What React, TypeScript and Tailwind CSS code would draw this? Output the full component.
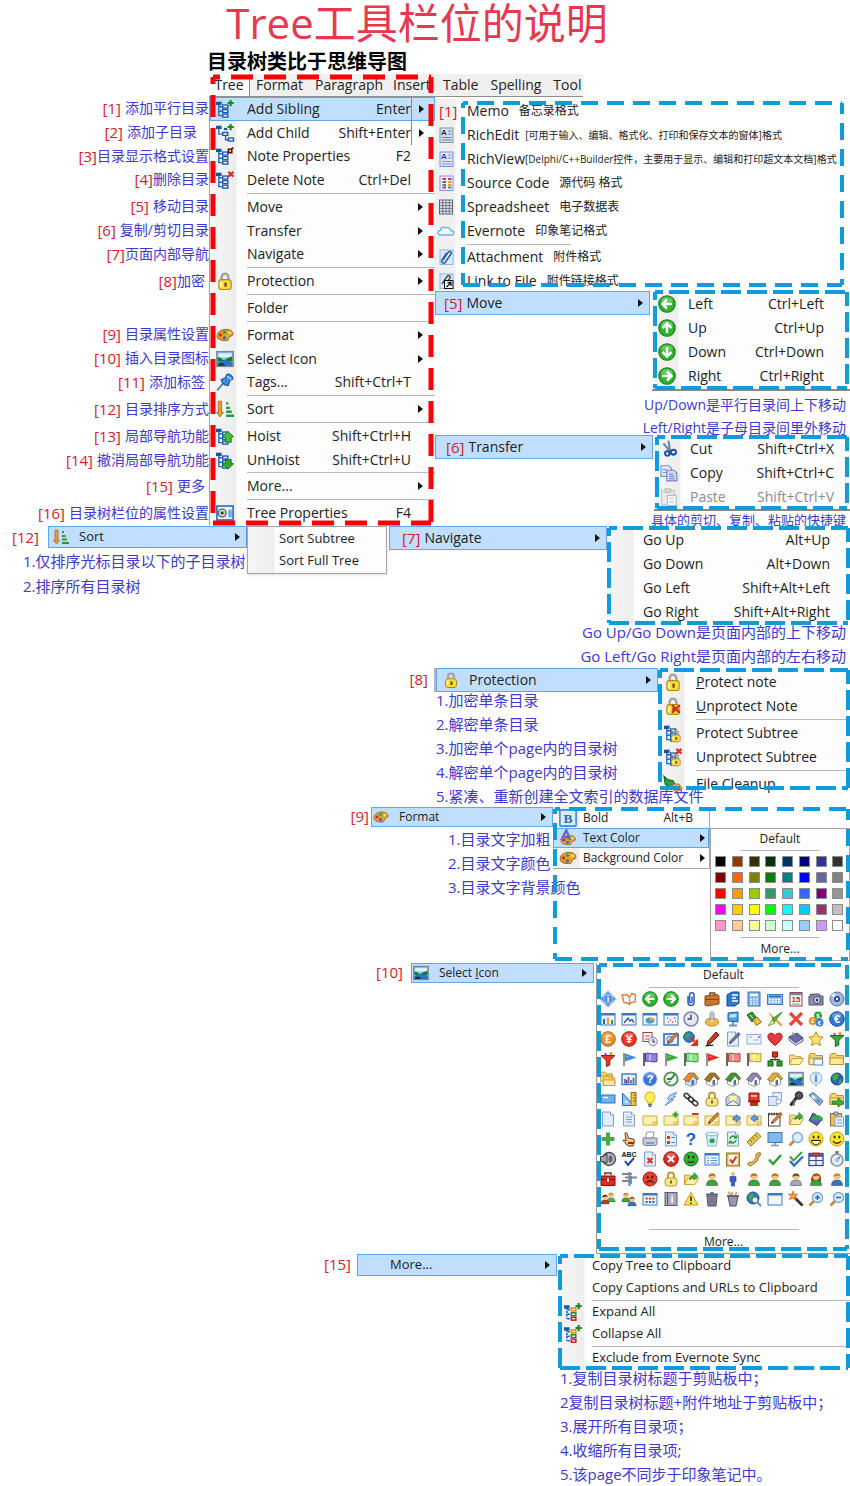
import type { ReactNode } from 'react';

const GREEN = '#2f9e2f';
const BLUE = '#2f6fc4';
const GOLD = '#f0c244';
const RED = '#d9301f';

/* ---------- small drawings ---------- */

function Txt({ c, fill = '#fff', size = 11, x = 8, y = 12 }: { c: string; fill?: string; size?: number; x?: number; y?: number }) {
  return (
    <text x={x} y={y} fontSize={size} fontWeight="bold" textAnchor="middle" fill={fill} fontFamily="Liberation Sans, sans-serif">
      {c}
    </text>
  );
}

const ball = (fill: string, stroke: string, inner?: ReactNode) => (
  <>
    <circle cx="8" cy="8" r="7.3" fill={fill} stroke={stroke} />
    <ellipse cx="8" cy="4.6" rx="5" ry="2.8" fill="#fff" opacity=".25" />
    {inner}
  </>
);

const arrowBall = (rotate: number) =>
  ball(
    '#2fb32f',
    '#147a14',
    <g transform={`rotate(${rotate} 8 8)`}>
      <path d="M12.5 8H4.5M8 4L4 8l4 4" fill="none" stroke="#fff" strokeWidth="2.2" />
    </g>
  );

const doc = (inner?: ReactNode) => (
  <>
    <path d="M2.5 1h8l3 3v11h-11z" fill="#e4eefb" stroke="#7d9fd0" />
    <path d="M10.5 1v3h3" fill="#fff" stroke="#7d9fd0" />
    {inner}
  </>
);

const pane = (inner?: ReactNode) => (
  <>
    <rect x="1" y="2.5" width="14" height="11.5" fill="#f2f8ff" stroke="#3d78c2" />
    <path d="M1 3.5h14" stroke="#3d78c2" strokeWidth="2" />
    {inner}
  </>
);

const note = (inner?: ReactNode) => (
  <>
    <path d="M1 5h14v9H1z" fill="#fdf0a8" stroke="#d1ab45" />
    <path d="M11 11h4v3h-4z" fill="#f7d978" stroke="#d1ab45" strokeWidth=".7" />
    {inner}
  </>
);

const folder = (inner?: ReactNode) => (
  <>
    <path d="M1 13.5V4l1.5-1.5h4L8 4.5h6.5v9z" fill="#f6d46e" stroke="#c0912c" />
    <path d="M1 13.5V7h13.5v6.5z" fill="#fdeb9d" stroke="#c0912c" />
    {inner}
  </>
);

const folderOpen = (inner?: ReactNode) => (
  <>
    <path d="M1.5 13.5V4h5l1.5 1.5h5V8" fill="#f6dc84" stroke="#c9a23a" />
    <path d="M1.5 13.5L4.5 7.5h11l-3.5 6z" fill="#fff1a8" stroke="#c9a23a" />
    {inner}
  </>
);

const flagSmall = (fill: string) => (
  <>
    <path d="M3 2v13" stroke="#8a8a8a" strokeWidth="1.8" />
    <path d="M4 2.5l11.5 4L4 10.5z" fill={fill} />
    <path d="M5 4.5l4 1.5-4 .5z" fill="#fff" opacity=".35" />
  </>
);

const flagBig = (fill: string, stroke: string) => (
  <>
    <path d="M2 2V15" stroke="#66666e" strokeWidth="2" />
    <path d="M3.5 2.5c3-1.500 6 1.500 11.5 0v8c-5.500 1.500-7.500-1.500-11.5 0z" fill={fill} stroke={stroke} />
    <path d="M8 3.500v6" stroke="#fff" strokeWidth="1.800" opacity=".5" />
  </>
);

const house = (roof: string, wall = '#fffaf0') => (
  <>
    <path d="M2.5 8.5v4.500L8 15.500l5.500-2.500V8L9 4z" fill={wall} stroke="#7b8694" strokeWidth=".8" />
    <path d="M.5 8.500L6 2h5l4.800 5.500L14 9l-4-4.500L5.500 11z" fill={roof} stroke="#5a4020" strokeWidth=".6" />
    <path d="M8.500 9.500l2.500-.8v4.800l-2.500 1z" fill="#4d6f9f" />
  </>
);

const person = (hair: string, coat: string) => (
  <>
    <path d="M2.500 14.500c0-4 2-5.500 5.500-5.500s5.500 1.500 5.500 5.500z" fill={coat} stroke="#27402a" strokeWidth=".5" />
    <circle cx="8" cy="5.600" r="3.400" fill="#f7c486" />
    <path d="M4.500 6C4 1.500 12 1 11.600 6 10.500 4 7 4.500 4.500 6z" fill={hair} />
  </>
);

const face = (fill: string, stroke: string, mouth: string) => (
  <>
    <circle cx="8" cy="8" r="7" fill={fill} stroke={stroke} />
    <ellipse cx="5.600" cy="6" rx="1" ry="1.600" fill="#332200" />
    <ellipse cx="10.400" cy="6" rx="1" ry="1.600" fill="#332200" />
    <path d={mouth} fill="none" stroke="#332200" strokeWidth="1.300" />
  </>
);

const padlock = (
  <>
    <path d="M5 8V4.500a3 3 0 016 0V8" fill="none" stroke="#a3a3a3" strokeWidth="2.200" />
    <rect x="2.500" y="6.800" width="11" height="8.700" rx="2.500" fill="#f8dc3e" stroke="#b48a12" />
    <path d="M4.500 8.500v5" stroke="#fff6b0" strokeWidth="1.500" />
    <path d="M8.500 9.500v3.500" stroke="#5a4208" strokeWidth="2" />
  </>
);

const pencil = (fill = '#e88a2a') => (
  <>
    <path d="M13.500 1.500l1.500 2-8 8-2.500 1 .8-2.500z" fill={fill} stroke="#5a2a10" strokeWidth=".7" />
    <path d="M4.500 12.500l1.300-.6-.8-.8z" fill="#000" />
  </>
);

const cross = (fill = RED) => <path d="M3 3l10 10M13 3L3 13" stroke={fill} strokeWidth="3" />;

const lens = (inner?: ReactNode) => (
  <>
    <path d="M6 10L1.500 14.500" stroke="#c98a35" strokeWidth="2.600" />
    <circle cx="9.500" cy="6.500" r="5" fill="#d9effc" stroke="#7fa6d0" strokeWidth="1.300" />
    {inner}
  </>
);

const funnel = (fill: string, stroke: string) => (
  <>
    <path d="M1 4.500h14L9.800 9.500V14l-3.500 1.500v-6z" fill={fill} stroke={stroke} />
    <circle cx="11" cy="2.500" r="1.500" fill="#f28b23" />
    <circle cx="5.500" cy="3" r="1.200" fill="#a04ad0" />
  </>
);

const landscape = (
  <>
    <rect x=".8" y="1.500" width="14.400" height="13" fill="#8ccdf5" stroke="#7c8791" strokeWidth="1.400" />
    <path d="M2 3h12v3.500H2z" fill="#d8f1ff" />
    <path d="M1.500 10V6.500c3 0 4 2 5.500 2.500 2-.5 4-3 7.500-3V10z" fill="#1b7a35" />
    <path d="M1.500 11c3-2 9-3 13 0v3h-13z" fill="#2c6fd0" />
    <path d="M1.500 14c2-3.500 5-3 7 0z" fill="#123c1c" />
  </>
);

const palette = (
  <>
    <path d="M1 9c0-4 4-6 8-6s6.500 2 6 4.500c-.4 2-3 1-3.500 2.500s.5 3-3 3S1 12 1 9z" fill="#e8a030" stroke="#8a5510" strokeWidth=".8" />
    <circle cx="4" cy="8" r="1.500" fill="#d82c1c" />
    <circle cx="7.500" cy="5.500" r="1.500" fill="#37a53a" />
    <circle cx="12" cy="6" r="1.400" fill="#f6e25a" />
    <circle cx="7.500" cy="10.500" r="1.500" fill="#3a64c8" />
  </>
);

const tree = (
  <g>
    <path d="M2.500 4v9.900h4M2.500 6h4M2.500 10h4" fill="none" stroke="#1f67b8" strokeWidth="1.200" />
    <rect x="0" y="1.500" width="5" height="3" fill="#1757a6" />
    <rect x="6" y="4.500" width="4.500" height="2.600" fill="#fff" stroke="#1757a6" strokeWidth="1.200" />
    <rect x="6" y="8.600" width="4.500" height="2.600" fill="#fff" stroke="#1757a6" strokeWidth="1.200" />
    <rect x="6" y="12.600" width="4.500" height="2.600" fill="#fff" stroke="#1757a6" strokeWidth="1.200" />
  </g>
);

const treeBranch = (
  <>
    <path d="M2.500 4v5h4M8.500 10v4h3" fill="none" stroke="#1f67b8" strokeWidth="1.200" />
    <rect x="0" y="1.500" width="5" height="3" fill="#1757a6" />
    <rect x="6" y="7.500" width="4.500" height="2.600" fill="#fff" stroke="#1757a6" strokeWidth="1.200" />
    <rect x="11" y="12.500" width="4.500" height="2.600" fill="#fff" stroke="#1757a6" strokeWidth="1.200" />
    <path d="M7 4.500h3" stroke="#1757a6" strokeWidth="2" />
  </>
);

const greenPlus = <path d="M13 0v5.500M10.200 2.700h5.600" stroke="#1b8a1b" strokeWidth="1.900" />;
const redMark = <path d="M11 .8l4.500 4.200M15.500.8L11 5" stroke={RED} strokeWidth="1.900" />;

const icons: Record<string, ReactNode> = {
  infoDiamond: (
    <>
      <path d="M8 .5L15.500 8 8 15.500.5 8z" fill="#2c6fc9" stroke="#8fb7e8" strokeWidth="1.500" />
      <circle cx="8" cy="8" r="4.500" fill="#4a8fe2" stroke="#cfe2fa" strokeWidth=".7" />
      <Txt c="i" size={9} y={11} />
    </>
  ),
  openBook: (
    <>
      <path d="M1 4l5-.5 2.500 3L11 2.500l3.500 1.500L14 11l-4 .5-1.500 2L6.500 12 3 11.500z" fill="#fff" stroke="#e07c34" strokeWidth="1.400" />
      <path d="M8.500 6.500v7" stroke="#8fa8d0" strokeWidth="1.200" />
    </>
  ),
  left: arrowBall(0),
  up: arrowBall(90),
  right: arrowBall(180),
  down: arrowBall(270),
  clip: <path d="M5 5v6.500a3 3 0 006 0V4a2.200 2.200 0 00-4.400 0v6.500a1.200 1.200 0 002.400 0V5.500" fill="none" stroke="#2b5fb0" strokeWidth="1.500" />,
  briefcase: (
    <>
      <path d="M6 4V2h4.500v2" fill="none" stroke="#7b4312" strokeWidth="1.500" />
      <path d="M1 5l12-1.500 2 1.500v8L3 15l-2-1z" fill="#c8762c" stroke="#854815" />
      <path d="M1 8.500h14" stroke="#854815" />
    </>
  ),
  server: (
    <>
      <path d="M2 4l5-3h7v11l-4 3H2z" fill="#2f78d0" stroke="#174a91" />
      <path d="M7 4h6M7 7h4M7 10h6" stroke="#fff" strokeWidth="1.500" />
    </>
  ),
  calculator: (
    <>
      <rect x="2" y="1" width="12" height="14" fill="#7db0e4" stroke="#3e74b6" />
      <path d="M4 4h8" stroke="#fff" strokeWidth="2.500" />
      <path d="M4 8h8M4 10.500h8M4 13h8" stroke="#eaf4ff" strokeWidth="1.500" strokeDasharray="2 1" />
    </>
  ),
  keyboard: (
    <>
      <rect x=".5" y="3.500" width="15" height="10" fill="#8fc1ef" stroke="#3d78c2" />
      <path d="M2 5.500h12" stroke="#2c62a8" strokeWidth="1.500" />
      <path d="M2 8.500h12M2 11h12" stroke="#fff" strokeWidth="1.600" strokeDasharray="2 1" />
    </>
  ),
  calendar: (
    <>
      <rect x="2" y="1.500" width="12" height="13.500" fill="#fff" stroke="#9a3e40" />
      <path d="M2 3h12" stroke="#7384a5" strokeWidth="2.500" />
      <Txt c="15" fill="#d02020" size={8} y={11} />
      <path d="M4 13h8" stroke="#888" />
    </>
  ),
  camera: (
    <>
      <path d="M1 5h3.500L6 3h5l1.500 2H15v9H1z" fill="#8c8fb0" stroke="#4c4f70" />
      <circle cx="9" cy="9" r="3.500" fill="#dfe7f8" stroke="#35385c" />
      <circle cx="9" cy="9" r="1.500" fill="#2a3470" />
      <path d="M2 3.500h3" stroke="#555" strokeWidth="1.500" />
    </>
  ),
  disc: (
    <>
      <circle cx="8" cy="8" r="7" fill="#9fbbe3" stroke="#51709f" />
      <path d="M8 8L2 5a7 7 0 013-3.500z" fill="#fff" opacity=".7" />
      <circle cx="8" cy="8" r="3" fill="#2d4b86" />
      <circle cx="8" cy="8" r="1.200" fill="#fff" />
    </>
  ),
  barWindow: pane(
    <>
      <path d="M4 13V8" stroke="#1f67c8" strokeWidth="2" />
      <path d="M8 13V6.500" stroke="#f0a020" strokeWidth="2" />
      <path d="M12 13V9" stroke="#30a040" strokeWidth="2" />
    </>
  ),
  lineWindow: pane(<path d="M3 12l4-5 2 3 2-1.500 2 3.500" fill="none" stroke="#34507c" strokeWidth="1.300" />),
  pieWindow: pane(
    <>
      <ellipse cx="8" cy="9.500" rx="4.500" ry="3" fill="#4a9ad8" />
      <path d="M8 9.500V6.500a5 3 0 014.500 3z" fill="#e8a03a" />
      <path d="M8 9.500L4.500 11.500A5 3 0 008 12.500z" fill="#58a85a" />
    </>
  ),
  dotWindow: pane(<path d="M4 7h1M7 9h1M11 7h1M5 11h1M9 11h1M12 10h1" stroke="#d44" strokeWidth="1.500" />),
  clock: (
    <>
      <circle cx="8" cy="8" r="7" fill="#e6e6f5" stroke="#7f7fae" strokeWidth="1.500" />
      <path d="M8 3.500V8H4.500" fill="none" stroke="#3b3b70" strokeWidth="1.300" />
    </>
  ),
  ring: (
    <>
      <ellipse cx="8" cy="11" rx="6.500" ry="4" fill={GOLD} stroke="#ad7e15" />
      <ellipse cx="8" cy="10" rx="3" ry="1.500" fill="#fff3b8" stroke="#ad7e15" strokeWidth=".6" />
      <rect x="6" y="1" width="4" height="8" rx="1.500" fill="#c4c8d4" stroke="#737a8c" strokeWidth=".7" />
    </>
  ),
  network: (
    <>
      <path d="M3 2l10-1v10l-10-1z" fill="#4aa0ea" stroke="#24589c" />
      <path d="M4.500 3.500l7-.8v3.500l-7 .3z" fill="#bfe2ff" />
      <path d="M8 11v2.500M4 14.500h8" stroke="#6f8db8" strokeWidth="1.800" />
    </>
  ),
  money: (
    <>
      <path d="M1 4l5-3 4 5-4 5z" fill={GREEN} stroke="#176017" />
      <path d="M7 9l4-3 4.500 5-5 3.500z" fill={GOLD} stroke="#8d6a14" />
      <path d="M4 4l3 3" stroke="#fff" />
    </>
  ),
  pens: (
    <>
      <path d="M1 1l6 5 3 3-3 1z" fill="#e8931e" />
      <path d="M15 1L5 8l2.500 3z" fill="#49b83c" stroke="#227a1c" strokeWidth=".7" />
      <path d="M1 15l4-6 3 3z" fill="#d7e9a0" stroke="#5c9a30" strokeWidth=".8" />
      <path d="M9 9l5.500 5.500" stroke="#e8931e" strokeWidth="1.800" />
    </>
  ),
  redX: <path d="M2 2l12 12M14 2L2 14" stroke="#e04a3c" strokeWidth="3.200" />,
  coins: (
    <>
      <circle cx="10" cy="4.500" r="4" fill="#37a83c" />
      <circle cx="4.800" cy="10" r="4" fill="#ef8d23" />
      <circle cx="11.500" cy="11.500" r="4" fill="#3a80d8" />
      <Txt c="$" size={6} x={10} y={7} />
      <Txt c="£" size={6} x={4.8} y={12} />
      <Txt c="€" size={6} x={11.5} y={14} />
    </>
  ),
  euro: ball('#2f78d2', '#1a4f99', <Txt c="€" />),
  pound: ball('#ef8d23', '#b4600d', <Txt c="£" />),
  yen: ball('#e83528', '#a8170e', <Txt c="¥" />),
  schedule: (
    <>
      <rect x="1" y="1.500" width="9" height="9" fill="#fff" stroke="#9a3e40" />
      <path d="M3 5h5M3 8h4" stroke="#c44" strokeWidth="1.200" />
      <circle cx="11" cy="10.500" r="4.300" fill="#e6e6f5" stroke="#7f7fae" />
      <path d="M11 8v3h2" fill="none" stroke="#333" />
    </>
  ),
  editPane: (
    <>
      <rect x="1" y="3" width="14" height="11" fill="#eaf4ff" stroke="#2b6ac0" strokeWidth="1.600" />
      <circle cx="7" cy="8.500" r="3" fill="none" stroke="#5f9de0" strokeWidth="1.300" />
      {pencil()}
    </>
  ),
  globeArrow: (
    <>
      <circle cx="6" cy="6" r="5.300" fill="#2e7fc4" stroke="#1b4e86" />
      <path d="M3 3c3-2 5 0 3 2s-2 3-4 1z" fill="#3faf3f" />
      <path d="M8 7l3.500 3.500" stroke={RED} strokeWidth="3" />
      <path d="M15 7.500v7.500H7.500z" fill={RED} />
    </>
  ),
  redPencil: (
    <>
      <path d="M12 1l3 3-8 8-4 2 1-4z" fill="#d43a20" stroke="#5b1308" />
      <path d="M1.500 15c3-1.500 5 0 8-1" stroke="#111" fill="none" strokeWidth="1.300" />
    </>
  ),
  docPen: doc(pencil('#5a80c0')),
  mail: (
    <>
      <rect x="1" y="3.500" width="14" height="9.500" fill="#eef6ff" stroke="#8bafdc" />
      <path d="M8 9h5M3 6h3" stroke="#8bafdc" />
      <path d="M12 5h2v2h-2z" fill="#e04" opacity=".6" />
    </>
  ),
  heart: <path d="M8 14.500C1.500 9.500.5 7 1 4.500 2 1.500 6 1.500 8 4.500c2-3 6-3 7 0 .5 2.500-.5 5-7 10z" fill="#e33a3f" stroke="#a9161b" />,
  book: (
    <>
      <path d="M1 6l8-4 6 5-7.500 5z" fill="#6a6aa8" stroke="#3d3d74" />
      <path d="M1 6v3l6.500 5.500L15 10V7l-7.500 5z" fill="#d8daf0" stroke="#3d3d74" strokeWidth=".8" />
      <path d="M4 1l4 2-3 2z" fill="#8ca04a" />
    </>
  ),
  star: <path d="M8 .8l2.200 4.700 5 .6-3.700 3.400 1 5L8 12l-4.500 2.500 1-5L.8 6.100l5-.6z" fill="#fbe36a" stroke="#c08a1c" />,
  funnelGreen: funnel('#37a83c', '#1c6c1e'),
  funnelRed: funnel('#e0392c', '#951a10'),
  flagBlue: flagSmall('#3c8ae0'),
  flagPurple: flagBig('#8c84dc', '#4a40a0'),
  flagGreen: flagSmall('#2fae35'),
  flagLime: flagBig('#8ee28c', '#3a9a3a'),
  flagRed: flagSmall('#ea2a1f'),
  flagPink: flagBig('#f08a84', '#b8403a'),
  flagYellow: flagBig('#f3e77a', '#b49a30'),
  orgChart: (
    <>
      <path d="M8 5v5M3.500 11V8.500h9V11" fill="none" stroke="#333" />
      <rect x="5.500" y="1" width="5" height="5" fill={RED} stroke="#8a140a" />
      <rect x="1" y="10" width="5" height="5" fill={GREEN} stroke="#155f15" />
      <rect x="10" y="10" width="5" height="5" fill={GREEN} stroke="#155f15" />
    </>
  ),
  folderOpen: folderOpen(),
  folderWindow: folder(<rect x="6" y="8" width="8.500" height="6" fill="#fff" stroke="#4d86c8" />),
  folder: folder(),
  folders: (
    <>
      <g transform="translate(0 -1) scale(.85)">{folder()}</g>
      <g transform="translate(2.500 3) scale(.85)">{folder()}</g>
    </>
  ),
  chart: (
    <>
      <rect x="1" y="3" width="14" height="10.500" fill="#e6f1fc" stroke="#3d78c2" strokeWidth="1.400" />
      <path d="M4 12.500V8M7.500 12.500V6M12.500 12.500V7" stroke={BLUE} strokeWidth="1.700" />
      <path d="M5.700 12.500V9M10 12.500V9" stroke="#d03028" strokeWidth="1.500" />
    </>
  ),
  help: ball('#3a74d8', '#d5e3fa', <Txt c="?" />),
  compass: (
    <>
      <circle cx="8" cy="8" r="6.700" fill="#e8f6e8" stroke="#5a8a5e" strokeWidth="1.800" />
      <path d="M12 3L8 8H4" fill="none" stroke="#2c8a34" strokeWidth="2" />
      <path d="M4 12l4-2" stroke="#666" />
    </>
  ),
  houseOrange: house('#ee8833', '#c9e0fb'),
  houseBrown: house('#a8741c'),
  houseGreen: house('#32a032'),
  housePurple: house('#8a86d4'),
  houseGold: house('#efae2d'),
  landscape,
  infoBubble: (
    <>
      <path d="M8 1a6 6 0 014 10.500c-2 1-3 1.500-4 4-1-2.500-2-3-4-4A6 6 0 018 1z" fill="#dcebfb" stroke="#8fb0d8" />
      <Txt c="i" fill="#2b5fae" size={10} y={10.5} />
    </>
  ),
  globe: (
    <>
      <circle cx="8" cy="8" r="6" fill="#2a62b8" stroke="#173f7d" />
      <path d="M4 4c4-3 7 0 5 2.500s-1 3-3 3-3-2-2-5.500zM10 9l3-1-1 4-2 1z" fill="#3fae3c" />
    </>
  ),
  card: (
    <>
      <rect x="1" y="4" width="14" height="8" fill="#6eb2ec" stroke="#3272b8" />
      <path d="M3 6.500h5" stroke="#fff" strokeWidth="1.300" />
    </>
  ),
  rulers: (
    <>
      <path d="M1.500 2v12.500H13z" fill="#8fc0f2" stroke="#2b6ac0" />
      <path d="M4.500 9v3h3z" fill="#fff" />
      <rect x="10" y="1.500" width="5" height="13" fill="#f0c53f" stroke="#9a7420" />
      <path d="M12.500 4H15M12.500 7H15M12.500 10H15" stroke="#7a5a10" />
    </>
  ),
  bulb: (
    <>
      <path d="M8 1a5 5 0 013 9l-.8 2H5.800L5 10a5 5 0 013-9z" fill="#fff14a" stroke="#d3b020" />
      <path d="M6 13.500h4M6.500 15.200h3" stroke="#666" strokeWidth="1.500" />
    </>
  ),
  lightning: <path d="M14 1.500L7 4 4.500 8l3 .3L2 14.500l8.500-5.500-2.500-.8 4.500-2.500-2-.8z" fill="#b9d8f8" stroke="#5f8ecb" />,
  chain: (
    <g fill="none" stroke="#333" strokeWidth="1.500">
      <rect x="1" y="3" width="6" height="4" rx="2" transform="rotate(40 4 5)" />
      <rect x="5" y="6.500" width="6" height="4" rx="2" transform="rotate(40 8 8.500)" />
      <rect x="9" y="10" width="6" height="4" rx="2" transform="rotate(40 12 12)" />
    </g>
  ),
  padlock,
  padlockGold: (
    <>
      <path d="M5 8V4.500a3 3 0 016 0V8" fill="none" stroke="#c79b2c" strokeWidth="2" />
      <rect x="2" y="7" width="12" height="8" rx="3" fill="#fbe88a" stroke="#c0912c" />
      <path d="M8 9.500v3" stroke="#5a4208" strokeWidth="1.600" />
    </>
  ),
  mailOpen: (
    <>
      <path d="M1 6.500L8 2l7 4.500v8H1z" fill="#c5cff0" stroke="#6d7cb4" />
      <path d="M4 4.500h8v5l-4 2.500-4-2.500z" fill="#fff7b8" stroke="#c9b45c" strokeWidth=".7" />
      <path d="M1 14.500l7-5 7 5z" fill="#eef1fc" stroke="#6d7cb4" />
    </>
  ),
  mailbox: (
    <>
      <path d="M3 2h10v8H3z" fill="#e23a2c" stroke="#8f160c" />
      <path d="M5 5h6" stroke="#fff" strokeWidth="1.200" />
      <path d="M4 10h8v5H4z" fill="#c9281c" />
      <path d="M2 10.500h12" stroke="#8f160c" strokeWidth="1.500" />
    </>
  ),
  copies: (
    <>
      <rect x="6" y="1.500" width="8.500" height="8" fill="#e9effa" stroke="#8ba3cc" />
      <rect x="1.500" y="5.500" width="8.500" height="9" fill="#dbe6f8" stroke="#8ba3cc" />
      <circle cx="11.500" cy="10.500" r="2.500" fill="#f6faff" stroke="#8ba3cc" />
    </>
  ),
  microphone: (
    <>
      <circle cx="11" cy="4.500" r="3.800" fill="#55556a" stroke="#222" />
      <path d="M9 6l-6.500 8.500" stroke="#333" strokeWidth="3" />
      <path d="M6 9v6" stroke="#777" strokeWidth="1.500" />
    </>
  ),
  mobile: (
    <>
      <path d="M1 4l4-2.500 10 8.500-3.500 4.500z" fill="#8cb4dc" stroke="#4b6f9c" />
      <path d="M4 5l3 2.500" stroke="#eef8ff" strokeWidth="2.500" />
      <path d="M9 9l3 2.500" stroke="#3f5f88" strokeWidth="2" strokeDasharray="1 1" />
    </>
  ),
  exportFolder: (
    <>
      {folder()}
      <path d="M3 10h6V7l6 4.500-6 4.500v-3H3z" fill="#3cb43c" stroke="#176c17" strokeWidth=".8" />
    </>
  ),
  page: doc(),
  pageLines: doc(<path d="M5 6h6M5 8.500h6M5 11h6" stroke="#7d9fd0" />),
  note: note(),
  notePlus: note(<path d="M12.500.5v6M9.500 3.500h6" stroke={GREEN} strokeWidth="2" />),
  noteMinus: note(<path d="M9 3h6.500" stroke={RED} strokeWidth="2" />),
  notePencil: note(pencil()),
  noteRight: note(<path d="M8 6h3V3.500L15.500 7.500 11 11V9H8z" fill="#5e9be0" stroke="#2e62a8" strokeWidth=".7" />),
  noteLeft: note(<path d="M12 6H9V3.500L4.500 7.500 9 11V9h3z" fill="#5e9be0" stroke="#2e62a8" strokeWidth=".7" />),
  notepad: (
    <>
      <rect x="1.500" y="3" width="11.500" height="12" fill="#fff" stroke="#444" />
      <path d="M1.500 3h11.500" stroke="#444" strokeWidth="2.500" strokeDasharray="1.500 1" />
      {pencil()}
    </>
  ),
  folderUp: folderOpen(<path d="M7 9c0-4 2-5 4-5V1.500l4 4-4 3.500V6.500C9 6.500 8 7 7 9z" fill="#3cb43c" stroke="#176c17" strokeWidth=".6" />),
  bucket: (
    <>
      <path d="M5 2l9 6-5 6.500-8-5z" fill="#5a62b8" stroke="#2c3274" />
      <path d="M3 8c3-5 8-5 12-1l-.5 4C12 6.500 8 9 5 10z" fill="#3aa84a" />
    </>
  ),
  clipboard: (
    <>
      <rect x="1.500" y="2.500" width="11" height="12.500" fill="#e6bd68" stroke="#94702c" />
      <rect x="5" y="1" width="4" height="3" fill="#bbb" stroke="#666" strokeWidth=".7" />
      <path d="M6 6h8.500v9H6z" fill="#eef4fd" stroke="#7d9fd0" />
      <path d="M8 9h5M8 12h5" stroke="#7d9fd0" />
    </>
  ),
  plus: <path d="M8 1.500v13M1.500 8h13" stroke="#45ab45" strokeWidth="4" />,
  hand: (
    <>
      <path d="M4 2c1.500-1 2 0 2.500 1.500L7.500 7l5 1c1.500.5 1 4-.5 7H7L2 9.500c0-1 1.500-1 3 .5z" fill="#f3c08c" stroke="#6a4222" />
      <path d="M7 12h6" stroke="#6a4222" strokeWidth="2" />
    </>
  ),
  printer: (
    <>
      <path d="M5 1h7l-1 6H3z" fill="#fff" stroke="#8f98a8" />
      <path d="M1 7h14v6l-2 1.500H3L1 13z" fill="#c8ccd8" stroke="#7b8394" />
      <path d="M4 12h8" stroke="#5490d4" strokeWidth="1.500" />
    </>
  ),
  docList: doc(
    <>
      <path d="M4 5h3v3H4zM4 10h3v3H4z" fill="#cf3b30" />
      <path d="M8.500 6.500H12M8.500 11.500H12" stroke="#5b74a4" strokeWidth="1.200" />
    </>
  ),
  question: <Txt c="?" fill="#1f5fc8" size={17} y={14} />,
  recycle: (
    <>
      <path d="M2 3h12l-2 12H4z" fill="#d3ecf8" stroke="#7fb4d4" />
      <ellipse cx="8" cy="3" rx="6" ry="1.800" fill="#eefaff" stroke="#7fb4d4" />
      <path d="M8 7l3 2-1 3H6.500L5 9.500z" fill="#2fa04a" />
    </>
  ),
  docRecycle: doc(
    <path d="M5 8a3 3 0 015.500-1.500M11 9a3 3 0 01-5.500 1.500M11.500 4.500v2.500H9M4.500 13v-2.500H7" fill="none" stroke={GREEN} strokeWidth="1.600" />
  ),
  ruler: (
    <>
      <path d="M1 11L11 1.500l4 4L5 15z" fill="#e9c64e" stroke="#9a7420" />
      <path d="M4 9l2 2M6.500 6.500l2 2M9 4l2 2" stroke="#7a5a10" />
    </>
  ),
  monitor: (
    <>
      <rect x="1" y="1.500" width="14" height="10" fill="#7fb9f0" stroke="#4878ae" />
      <path d="M8 12v2M4 14.500h8" stroke="#8894a8" strokeWidth="1.600" />
    </>
  ),
  lens: lens(),
  laugh: (
    <>
      {face('#ffe62e', '#c99a12', 'M3.500 9.500h9')}
      <path d="M3.500 9.500h9a4.500 4 0 01-9 0z" fill="#fff" stroke="#332200" />
    </>
  ),
  smile: face('#ffe62e', '#c99a12', 'M4 10c2 3 6 3 8 0'),
  speaker: (
    <>
      <circle cx="9" cy="8" r="6.500" fill="#bcbcc6" stroke="#4e4e58" strokeWidth="1.400" />
      <path d="M.5 5.500H3L7 3v9L3 10.500H.5z" fill="#a4a4b0" stroke="#44444c" />
      <ellipse cx="10.500" cy="8" rx="2" ry="3.500" fill="#66666f" />
    </>
  ),
  spelling: (
    <>
      <Txt c="ABC" fill="#222" size={7} y={6} />
      <path d="M4 10l3 4 6-7" fill="none" stroke="#2540b0" strokeWidth="2" />
    </>
  ),
  docX: doc(<path d="M5.500 7l5 5M10.500 7l-5 5" stroke={RED} strokeWidth="2" />),
  stop: ball('#df2b20', '#96140b', <path d="M5 5l6 6M11 5l-6 6" stroke="#fff" strokeWidth="2.200" />),
  greenFace: face('#32b236', '#176c1a', 'M4.500 10.500c2 1 5 1 7 0'),
  listWindow: pane(<path d="M3 7h2M6.500 7H13M3 9.500h2M6.500 9.500H13M3 12h2M6.500 12H13" stroke="#5490d4" strokeWidth="1.200" />),
  clipCheck: (
    <>
      <rect x="1.500" y="2" width="13" height="13" fill="#e7b54e" stroke="#94702c" />
      <rect x="3.500" y="4" width="9" height="9.500" fill="#fff" />
      <path d="M5 8.500l2.500 3 4-6" fill="none" stroke={RED} strokeWidth="2" />
    </>
  ),
  phone: (
    <path d="M2 13.500c0-2.500 2-3 3-2 4-2 5-4 5-7 0-2 2-3.500 4.500-2.500l-.5 3c-1 0-1.500 0-1.500 1-.5 4-3 6-6 7.500-1 1.500-3 2-4.500 0z" fill="#e9be4e" stroke="#8f6a1c" />
  ),
  check: <path d="M2 8.500l4 4.500 8-9" fill="none" stroke={GREEN} strokeWidth="2.400" />,
  doubleCheck: (
    <>
      <path d="M2 5.500l3.500 4L14 1" fill="none" stroke="#43a047" strokeWidth="2" />
      <path d="M2 10l4 4.500 9-9" fill="none" stroke={BLUE} strokeWidth="2.400" />
    </>
  ),
  gift: (
    <>
      <rect x="1" y="2.500" width="14" height="12" fill="#f1f4ff" stroke="#3b4590" strokeWidth="1.300" />
      <path d="M1 4.500h14" stroke="#3b4590" strokeWidth="2.500" />
      <path d="M8 3v11M1 9.500h14" stroke="#3b4590" />
      <path d="M4 1.500h8l-4 4z" fill={RED} />
    </>
  ),
  stopwatch: (
    <>
      <circle cx="8" cy="9" r="6" fill="#e4ecf4" stroke="#8995a4" strokeWidth="1.600" />
      <path d="M8 1v2M6 1h4M8 9l3-3" stroke="#5f6b7a" strokeWidth="1.500" />
      <circle cx="8" cy="9" r="2" fill="#8fc0ee" />
    </>
  ),
  toolbox: (
    <>
      <path d="M5 4V2h6v2" fill="none" stroke="#444" strokeWidth="1.500" />
      <path d="M1 5h14v9.500H1z" fill="#d92d24" stroke="#7a120c" />
      <path d="M1 8.500h14" stroke="#7a120c" />
      <path d="M7 7.500h2v3H7z" fill="#fff" />
    </>
  ),
  signpost: (
    <>
      <path d="M8.500 1v14" stroke="#8a94a6" strokeWidth="2.600" />
      <path d="M1 3h10M4 6.500h12M1 10h8" stroke="#7c8798" strokeWidth="1.800" />
      <path d="M10 5v8" stroke="#4c86d0" strokeWidth="1.600" />
    </>
  ),
  angry: face('#e8402c', '#9a180c', 'M4.500 12c2-3 5-3 7 0'),
  person: person('#b86d1c', '#39a53c'),
  standing: (
    <>
      <circle cx="8" cy="3" r="2" fill="#f3b578" />
      <path d="M5 5.500h6v5H9.500V15h-3v-4.500H5z" fill="#3b5bd6" stroke="#22388e" strokeWidth=".6" />
    </>
  ),
  head: person('#4b4b55', '#a6a6b4'),
  woman: (
    <>
      <path d="M3 10C2 2 13 0 13 7v4z" fill="#9c4a16" />
      {person('#9c4a16', '#37a53a')}
    </>
  ),
  man: person('#c7832b', '#3a6fd0'),
  group: (
    <>
      <g transform="translate(5 0) scale(.75)">{person('#c8862a', '#4caf50')}</g>
      <g transform="translate(-1 2) scale(.75)">{person('#402818', '#c83426')}</g>
    </>
  ),
  couple: (
    <>
      <g transform="translate(-1 0) scale(.75)">{person('#c8862a', '#37a53a')}</g>
      <g transform="translate(5 4) scale(.75)">{person('#8f4a16', '#3a6fd0')}</g>
    </>
  ),
  apps: pane(
    <>
      <path d="M3.500 7.500h9" stroke="#cf3b30" strokeWidth="2.200" strokeDasharray="2.200 1.200" />
      <path d="M3.500 11h9" stroke="#2a64b8" strokeWidth="2.200" strokeDasharray="2.200 1.200" />
    </>
  ),
  infoBook: (
    <>
      <rect x="2" y="1.500" width="12" height="13" fill="#a6a8b8" stroke="#5c5f70" />
      <path d="M4.500 1.500v13" stroke="#5c5f70" />
      <Txt c="i" x={9} />
    </>
  ),
  warning: (
    <>
      <path d="M8 1.500L15 14H1z" fill="#ffe54a" stroke="#c39a1c" />
      <path d="M8 5.500v4.500M8 11.500v1.500" stroke="#222" strokeWidth="1.600" />
    </>
  ),
  trash: (
    <>
      <path d="M3 5h10l-1 10H4z" fill="#8a8a9c" stroke="#4c4c5c" />
      <path d="M2 3.500h12M6.500 2h3" stroke="#5c5c6c" strokeWidth="2" />
      <path d="M6 6.500v7M8 6.500v7M10 6.500v7" stroke="#5c5c6c" strokeWidth=".8" />
    </>
  ),
  trashFull: (
    <>
      <path d="M3 5h10l-2 10H5z" fill="#9a9aa8" stroke="#4c4c5c" />
      <path d="M3 1l3 3M7 1v3M12 1l-2 3" stroke="#e0a860" strokeWidth="1.800" />
      <path d="M2 5h12" stroke="#5c5c6c" strokeWidth="1.600" />
    </>
  ),
  globeLens: (
    <>
      <circle cx="7" cy="7" r="6" fill="#2e7fc4" stroke="#1b4e86" />
      <path d="M3 4c3-3 5 0 4 3s-3 3-4 0z" fill="#3faf3f" />
      <circle cx="9" cy="9" r="3.200" fill="#d9effc" stroke="#456" />
      <path d="M11.500 11.500L15 15" stroke="#4c94c8" strokeWidth="2" />
    </>
  ),
  window: pane(),
  wand: (
    <>
      <path d="M6 6l8.500 8.500" stroke="#3a3020" strokeWidth="2.600" />
      <path d="M5 0l1 3.500L9.500 3 7 5.500 8 9 5 7 1.500 8.500 3 5.500.5 3 4 3.500z" fill="#f5a72b" stroke="#e0491c" strokeWidth=".7" />
    </>
  ),
  zoomIn: lens(<path d="M7 6.500h5M9.500 4v5" stroke="#3566ad" strokeWidth="1.500" />),
  zoomOut: lens(<path d="M7 6.500h5" stroke="#3566ad" strokeWidth="1.500" />),

  treeAdd: (
    <>
      {tree}
      {greenPlus}
    </>
  ),
  treeChild: (
    <>
      {treeBranch}
      {greenPlus}
    </>
  ),
  treeProps: (
    <>
      {tree}
      <path d="M11 2h3v3h-3zM13.500 2L15.500.5" fill="none" stroke="#5a1208" strokeWidth="1.500" />
    </>
  ),
  treeDelete: (
    <>
      {tree}
      {redMark}
    </>
  ),
  treeHoist: (
    <>
      {tree}
      <path d="M10.500 4l5 4.500-2 1v4H8.500v-4L5.500 8.500z" fill="#3fc03f" stroke="#166c16" strokeWidth=".8" />
    </>
  ),
  treeUnhoist: (
    <>
      {tree}
      <path d="M10.500 16l5-4.500-2-1v-3H8.500v3l-3 1z" fill="#2fa82f" stroke="#166c16" strokeWidth=".8" />
    </>
  ),
  treeLock: (
    <>
      {tree}
      <g transform="translate(5 5) scale(.7)">{padlock}</g>
    </>
  ),
  treeUnlock: (
    <>
      {tree}
      <g transform="translate(5 5) scale(.7)">{padlock}</g>
      {redMark}
    </>
  ),
  treeColor: (
    <>
      <path d="M2.500 4v10M3 6h3M3 10h3M3 14h3" fill="none" stroke="#1757a6" strokeWidth="1.300" strokeDasharray="2 1" />
      <rect x="0" y="2" width="5" height="3" fill="#1757a6" />
      <rect x="6.500" y="4.500" width="4" height="2.500" fill="#fff" stroke="#e08a1e" strokeWidth="1.400" />
      <rect x="6.500" y="8.700" width="4" height="2.500" fill="#fff" stroke="#2a8f2d" strokeWidth="1.400" />
      <rect x="6.500" y="12.700" width="4" height="2.500" fill="#fff" stroke="#c3241b" strokeWidth="1.400" />
      {greenPlus}
    </>
  ),
  unlock: (
    <>
      {padlock}
      <g transform="translate(5 5) scale(.7)">{cross()}</g>
    </>
  ),
  palette,
  textPalette: (
    <>
      <g transform="translate(1 3.500) scale(.9 .8)">{palette}</g>
      <path d="M2 10L6.500 1 10 10M4 7h5" fill="none" stroke="#6a68bc" strokeWidth="2" />
    </>
  ),
  pin: (
    <>
      <path d="M1 15.500L6.500 9" stroke="#5c7fb0" strokeWidth="1.600" />
      <path d="M9.500 1.500c2-1.500 6 1.500 5.500 4l-2.500 1-1.500 4.500c-3 .5-6-2-6.500-5L8.500 4z" fill="#3d8ce0" stroke="#1c5aa8" />
      <path d="M10 3l3.500 2.500" stroke="#a9d2fa" strokeWidth="1.500" />
    </>
  ),
  sort: (
    <>
      <path d="M2 1h3v10h1.500L3.500 15 .5 11H2z" fill="#ee9a3c" stroke="#a65f14" strokeWidth=".7" />
      <path d="M9 3h2M9 7h3.500M9 10.500h5M9 14h7" stroke="#2f9440" strokeWidth="2.200" />
    </>
  ),
  settingsPane: (
    <>
      <rect x=".8" y="1.800" width="14.400" height="12.400" fill="#eaf4ff" stroke="#2d74c4" strokeWidth="1.500" />
      <circle cx="5.500" cy="8" r="3.500" fill="#cfd9a0" stroke="#30507c" />
      <circle cx="5.500" cy="8" r="1.300" fill="#234" />
      <rect x="11" y="5" width="3" height="7" fill="#6aaaf0" />
    </>
  ),
  richEdit: (
    <>
      <rect x="2" y="1" width="13" height="14.500" fill="#d3e0ea" stroke="#7d93a8" />
      <Txt c="A" fill="#333" size={8} x={6} y={8} />
      <path d="M10 4h3.500M10 7h3.500M4 10.500h9.500M4 13h9.500" stroke="#6a7f94" />
    </>
  ),
  richView: (
    <>
      <rect x="2" y="1" width="13" height="14.500" fill="#dbe6fb" stroke="#7c93c8" />
      <Txt c="A" fill="#3a3ac8" size={8} x={6} y={8} />
      <path d="M10 4h3.500M10 7h3.500M4 10.500h9.500M4 13h9.500" stroke="#7a8fe0" />
    </>
  ),
  source: (
    <>
      <rect x="2" y="1" width="13" height="14.500" fill="#eaf0fb" stroke="#8c96c0" />
      <path d="M4.500 4H8M4.500 12.500H8" stroke="#d8322c" strokeWidth="2" />
      <path d="M4.500 7H8M10 4h3.500" stroke="#a03ad0" strokeWidth="2" />
      <path d="M4.500 10H8M10 12.500h3.500" stroke="#2fa83a" strokeWidth="2" />
      <path d="M10 7h3.500M10 10h3.500" stroke="#ef9a2a" strokeWidth="2" />
    </>
  ),
  sheet: (
    <>
      <rect x="1.500" y="1" width="13" height="14" fill="#e8ebf0" stroke="#59606e" />
      <path d="M1.500 3.800h13M1.500 6.600h13M1.500 9.400h13M1.500 12.200h13M4.700 1v14M8 1v14M11.300 1v14" stroke="#6b7280" />
    </>
  ),
  cloud: <path d="M3 12C-1 12-1 7.500 2.500 7.500c0-3.500 4.500-4 5.500-2.500 2-1 4.500 0 4.500 2.500 4.500 0 4.500 4.500 1 4.500z" fill="#eaf7ff" stroke="#6cb2e2" strokeWidth="1.300" />,
  attachment: (
    <>
      <rect x="2" y="1" width="13" height="14.500" fill="#dcebfb" stroke="#93b4de" />
      <path d="M5 11l5-7.500c1.500-2 4-.5 3 1.500L7.500 13c-1.500 2.500-5 .5-3.500-2l4.500-7" fill="none" stroke="#2f5f9c" strokeWidth="1.500" />
    </>
  ),
  linkFile: (
    <>
      <rect x="2" y="1" width="13" height="14.500" fill="#dcebfb" stroke="#93b4de" />
      <path d="M4 11l5-7.500c1.500-2 4-.5 3 1.500L6.500 13" fill="none" stroke="#48505c" strokeWidth="1.500" />
      <rect x="6.500" y="7.500" width="8.500" height="8" fill="#fff" stroke="#111" />
      <path d="M8.500 14l4-4M9.500 9.500H13V13" fill="none" stroke="#111" strokeWidth="1.300" />
    </>
  ),
  cut: (
    <>
      <path d="M3 3l6 7M7.500.5L9 10" stroke="#6b86a4" strokeWidth="1.800" />
      <circle cx="6.500" cy="12" r="2" fill="none" stroke="#1d4fa8" strokeWidth="1.800" />
      <circle cx="12" cy="10.800" r="2.200" fill="none" stroke="#1d4fa8" strokeWidth="1.800" />
    </>
  ),
  copy: (
    <>
      <path d="M.8 1.500h7l2.500 2.500v7H.8z" fill="#e3e9fa" stroke="#7f93cc" />
      <path d="M6 5.500h6.500l2.500 2.500v7H6z" fill="#d3dcf6" stroke="#6f84c2" />
      <path d="M2.500 5h3M2.500 7.500h3M8 9h4M8 11h5M8 13h5" stroke="#7f93cc" />
    </>
  ),
  paste: (
    <>
      <rect x="1.500" y="2" width="11" height="13" fill="#ececec" stroke="#c2c2c2" />
      <rect x="4.500" y=".8" width="5" height="3" fill="#ddd" stroke="#bbb" />
      <path d="M6.500 6.500h8v9h-8z" fill="#f7f7f7" stroke="#bdbdbd" />
      <path d="M8.500 9.500h4M8.500 12.500h4" stroke="#ccc" />
    </>
  ),
  broom: (
    <>
      <path d="M0 1l3 3 5 1 2 4-4 3-5-4z" fill="#2f9e3a" stroke="#14601c" />
      <path d="M8 8h5l3 4-5 3-4-3z" fill="#eeb048" stroke="#b5701c" />
      <path d="M9 13l5-3" stroke="#cf4a20" strokeWidth="1.200" />
    </>
  ),
  bold: (
    <>
      <rect x=".8" y=".8" width="14.400" height="14.400" rx="1" fill="#dceefe" stroke="#3d86d0" strokeWidth="1.400" />
      <text x="8" y="12.500" fontSize="12" fontWeight="bold" textAnchor="middle" fill="#2a6db8" fontFamily="Liberation Serif, serif">
        B
      </text>
    </>
  ),
};

function Icon({ name, className = 'size-4' }: { name: string; className?: string }) {
  return (
    <svg viewBox="0 0 16 16" className={`shrink-0 overflow-visible ${className}`} aria-hidden="true">
      {icons[name]}
    </svg>
  );
}

/* ---------- building blocks ---------- */

function Arrow() {
  return (
    <svg viewBox="0 0 5 8" className="h-2 w-[5px] shrink-0" aria-hidden="true">
      <path d="M0 0l5 4-5 4z" fill="#111" />
    </svg>
  );
}

interface FrameProps {
  className: string;
  color?: string;
  dash?: string;
  width?: number;
  offset?: number;
}

// each side is its own line so that the dashes start from the corners
function Frame({ className, color = '#109cdb', dash = '20 6', width = 4, offset = 12 }: FrameProps) {
  return (
    <div className={`pointer-events-none absolute z-10 ${className}`}>
      <svg className="size-full overflow-visible" stroke={color} strokeWidth={width} strokeDasharray={dash} aria-hidden="true">
        <line x1="0" y1="0" x2="100%" y2="0" strokeDashoffset={offset} />
        <line x1="0" y1="0" x2="0" y2="100%" strokeDashoffset={offset} />
        <line x1="100%" y1="0" x2="100%" y2="100%" strokeDashoffset={6} />
        <line x1="0" y1="100%" x2="100%" y2="100%" />
      </svg>
    </div>
  );
}

interface Item {
  label: ReactNode;
  icon?: string;
  keys?: string;
  more?: boolean;
  active?: boolean;
  disabled?: boolean;
  split?: boolean;
}

interface MenuProps {
  items: (Item | '-')[];
  gutter?: string;
  end?: string;
  row?: string;
  sep?: string;
  className?: string;
}

function Menu({ items, gutter = 'w-9', end = 'w-4', row = 'h-6', sep = 'h-[3px]', className = '' }: MenuProps) {
  return (
    <ul className={`flex flex-col ${className}`}>
      {items.map((item, i) =>
        item === '-' ? (
          <li key={i} className={`flex shrink-0 items-center ${sep}`}>
            <span className={`shrink-0 ${gutter}`} />
            <span className="h-px flex-1 bg-[#b9b9b9]" />
          </li>
        ) : (
          <li key={i} className={`flex min-h-0 ${row}`}>
            <button
              disabled={item.disabled}
              className={`flex w-full items-center whitespace-nowrap text-left ${
                item.active ? 'bg-[#c0dfff] outline outline-1 -outline-offset-1 outline-[#5ea6ee]' : ''
              } ${item.disabled ? 'text-[#8c8c8c]' : ''}`}
            >
              <span className={`flex shrink-0 pl-1.5 ${gutter}`}>{item.icon && <Icon name={item.icon} className="size-[18px]" />}</span>
              <span>{item.label}</span>
              <span className="ml-auto">{item.keys}</span>
              <span className={`flex shrink-0 items-center self-stretch pl-[7px] ${item.split ? 'border-l border-[#7d8fa5]' : ''} ${end}`}>
                {item.more && <Arrow />}
              </span>
            </button>
          </li>
        )
      )}
    </ul>
  );
}

function Bar({ label, icon, tag, className = '' }: { label: ReactNode; icon?: string; tag?: string; className?: string }) {
  return (
    <button className={`flex shrink-0 items-center whitespace-nowrap border border-[#5ea6ee] bg-[#c0dfff] pr-1.5 text-left ${className}`}>
      {tag && <Tag className="mr-1">{tag}</Tag>}
      {icon && <Icon name={icon} className="mr-2.5 size-4" />}
      <span>{label}</span>
      <span className="ml-auto">
        <Arrow />
      </span>
    </button>
  );
}

function Tag({ children, className = '' }: { children: ReactNode; className?: string }) {
  return <span className={`shrink-0 text-[15px] leading-5 text-[#d3202c] ${className}`}>[{children}]</span>;
}

function Notes({ lines, className = '' }: { lines: string[]; className?: string }) {
  return (
    <div className={`whitespace-nowrap text-[#4038d0] ${className}`}>
      {lines.map((line) => (
        <p key={line}>{line}</p>
      ))}
    </div>
  );
}

/* ---------- data ---------- */

const treeLabels: ([string, string, string?] | '-' | '')[] = [
  ['1', '添加平行目录', 'gap-1 text-[#2a22c4]'],
  ['2', '添加子目录', 'gap-1 pr-3 text-[#2a22c4]'],
  ['3', '目录显示格式设置'],
  ['4', '删除目录'],
  '-',
  ['5', '移动目录', 'gap-1'],
  ['6', '复制/剪切目录', 'gap-1'],
  ['7', '页面内部导航'],
  '-',
  ['8', '加密', 'pr-1'],
  '-',
  '',
  '-',
  ['9', '目录属性设置', 'gap-1'],
  ['10', '插入目录图标', 'gap-1'],
  ['11', '添加标签', 'gap-1 pr-1'],
  '-',
  ['12', '目录排序方式', 'gap-1'],
  '-',
  ['13', '局部导航功能', 'gap-1'],
  ['14', '撤消局部导航功能', 'gap-1'],
  '-',
  ['15', '更多', 'gap-1 pr-1 text-[#8a84e4]'],
  '-',
  ['16', '目录树栏位的属性设置', 'gap-1'],
];

const treeMenu: (Item | '-')[] = [
  { label: 'Add Sibling', icon: 'treeAdd', keys: 'Enter', more: true, active: true, split: true },
  { label: 'Add Child', icon: 'treeChild', keys: 'Shift+Enter', more: true, split: true },
  { label: 'Note Properties', icon: 'treeProps', keys: 'F2' },
  { label: 'Delete Note', icon: 'treeDelete', keys: 'Ctrl+Del' },
  '-',
  { label: 'Move', more: true },
  { label: 'Transfer', more: true },
  { label: 'Navigate', more: true },
  '-',
  { label: 'Protection', icon: 'padlock', more: true },
  '-',
  { label: 'Folder' },
  '-',
  { label: 'Format', icon: 'palette', more: true },
  { label: 'Select Icon', icon: 'landscape', more: true },
  { label: 'Tags...', icon: 'pin', keys: 'Shift+Ctrl+T' },
  '-',
  { label: 'Sort', icon: 'sort', more: true },
  '-',
  { label: 'Hoist', icon: 'treeHoist', keys: 'Shift+Ctrl+H' },
  { label: 'UnHoist', icon: 'treeUnhoist', keys: 'Shift+Ctrl+U' },
  '-',
  { label: 'More...', more: true },
  '-',
  { label: 'Tree Properties', icon: 'settingsPane', keys: 'F4' },
];

const noteTypes: { name: string; desc: string; icon?: string; descClass: string }[] = [
  { name: 'Memo', desc: '备忘录格式', descClass: 'pl-2.5 text-xs' },
  { name: 'RichEdit', desc: '[可用于输入、编辑、格式化、打印和保存文本的窗体]格式', icon: 'richEdit', descClass: 'pl-1.5 text-[10px]' },
  { name: 'RichView', desc: '[Delphi/C++Builder控件，主要用于显示、编辑和打印超文本文档]格式', icon: 'richView', descClass: 'text-[10px]' },
  { name: 'Source Code', desc: '源代码 格式', icon: 'source', descClass: 'pl-2.5 text-xs' },
  { name: 'Spreadsheet', desc: '电子数据表', icon: 'sheet', descClass: 'pl-2.5 text-xs' },
  { name: 'Evernote', desc: '印象笔记格式', icon: 'cloud', descClass: 'pl-2.5 text-xs' },
  { name: 'Attachment', desc: '附件格式', icon: 'attachment', descClass: 'pl-2.5 text-xs' },
  { name: 'Link to File', desc: '附件链接格式', icon: 'linkFile', descClass: 'pl-2.5 text-xs' },
];

const swatches = [
  '#000000', '#993300', '#333300', '#003300', '#003366', '#000080', '#333399', '#333333',
  '#800000', '#ff6600', '#808000', '#008000', '#008080', '#0000ff', '#666699', '#808080',
  '#ff0000', '#ff9900', '#99cc00', '#339966', '#33cccc', '#3366ff', '#800080', '#969696',
  '#ff00ff', '#ffcc00', '#ffff00', '#00ff00', '#00ffff', '#00ccff', '#993366', '#c0c0c0',
  '#ff99cc', '#ffcc99', '#ffff99', '#ccffcc', '#ccffff', '#99ccff', '#cc99ff', '#ffffff',
];

const iconGrid = [
  'infoDiamond', 'openBook', 'left', 'right', 'clip', 'briefcase', 'server', 'calculator', 'keyboard', 'calendar', 'camera', 'disc',
  'barWindow', 'lineWindow', 'pieWindow', 'dotWindow', 'clock', 'ring', 'network', 'money', 'pens', 'redX', 'coins', 'euro',
  'pound', 'yen', 'schedule', 'editPane', 'globeArrow', 'redPencil', 'docPen', 'mail', 'heart', 'book', 'star', 'funnelGreen',
  'funnelRed', 'flagBlue', 'flagPurple', 'flagGreen', 'flagLime', 'flagRed', 'flagPink', 'flagYellow', 'orgChart', 'folderOpen', 'folderWindow', 'folder',
  'folders', 'chart', 'help', 'compass', 'houseOrange', 'houseBrown', 'houseGreen', 'housePurple', 'houseGold', 'landscape', 'infoBubble', 'globe',
  'card', 'rulers', 'bulb', 'lightning', 'chain', 'padlockGold', 'mailOpen', 'mailbox', 'copies', 'microphone', 'mobile', 'exportFolder',
  'page', 'pageLines', 'note', 'notePlus', 'noteMinus', 'notePencil', 'noteRight', 'noteLeft', 'notepad', 'folderUp', 'bucket', 'clipboard',
  'plus', 'hand', 'printer', 'docList', 'question', 'recycle', 'docRecycle', 'ruler', 'monitor', 'lens', 'laugh', 'smile',
  'speaker', 'spelling', 'docX', 'stop', 'greenFace', 'listWindow', 'clipCheck', 'phone', 'check', 'doubleCheck', 'gift', 'stopwatch',
  'toolbox', 'signpost', 'angry', 'padlockGold', 'folderUp', 'person', 'standing', 'person', 'person', 'head', 'woman', 'man',
  'group', 'couple', 'apps', 'infoBook', 'warning', 'trash', 'trashFull', 'globeLens', 'window', 'wand', 'zoomIn', 'zoomOut',
];

const GUTTER = 'bg-[linear-gradient(to_right,#f6f6f6,#ededed_26px,#fdfdfd_27px)]';

/* ---------- sections ---------- */

function TreeSection() {
  return (
    <section className="flex">
      <ul className="flex w-[209px] shrink-0 flex-col pt-[22px]">
        {treeLabels.map((row, i) =>
          row === '-' ? (
            <li key={i} className="h-[3px] shrink-0" />
          ) : (
            <li key={i} className={`flex h-[23px] grow items-center justify-end whitespace-nowrap text-sm text-[#4038d0] ${row ? row[2] ?? '' : ''}`}>
              {row && (
                <>
                  <Tag>{row[0]}</Tag>
                  <span>{row[1]}</span>
                </>
              )}
            </li>
          )
        )}
      </ul>

      <div className="relative flex w-[226px] shrink-0 flex-col">
        <nav className="flex h-[23px] shrink-0 items-stretch overflow-hidden border-b border-[#8f8f8f] bg-[#f0f0f0] text-sm">
          <button className="w-[41px] border-r border-[#8f8f8f] bg-white text-center">Tree</button>
          <button className="px-1.5">Format</button>
          <button className="px-1.5">Paragraph</button>
          <button className="px-1">Insert</button>
        </nav>
        <Menu items={treeMenu} gutter="w-[37px]" end="w-6" row="h-[23px] grow" className={`grow border-l border-[#a5a5a5] text-sm ${GUTTER}`} />
        <Frame className="inset-x-1 top-[3px] bottom-[2px]" color="#fb0007" dash="22 11" width={5} offset={15} />
      </div>

      <div className="flex min-w-0 flex-1 flex-col text-sm">
        <nav className="flex h-[23px] w-[148px] overflow-hidden border-b border-[#8f8f8f] bg-[#f0f0f0]">
          <button className="pl-2 pr-1.5">Table</button>
          <button className="px-1.5">Spelling</button>
          <button className="px-1.5">Tool</button>
        </nav>

        <div className="relative h-[194px] overflow-hidden pt-[2px]">
          <ul className="bg-[linear-gradient(to_right,#f0f0f0_20px,#ffffff_21px)]">
            {noteTypes.map((t, i) => (
              <li key={t.name} className={i === 6 ? 'relative mt-[2px]' : ''}>
                {i === 6 && <hr className="absolute -top-px left-8 w-[104px] border-[#b9b9b9]" />}
                <button className="flex h-6 items-center whitespace-nowrap">
                  <span className="flex w-8 shrink-0 items-center">
                    {t.icon ? <Icon name={t.icon} className="ml-[3px] size-4" /> : <Tag className="pl-1">1</Tag>}
                  </span>
                  <span>{t.name}</span>
                  <span className={t.descClass}>{t.desc}</span>
                </button>
              </li>
            ))}
          </ul>
          <Frame className="top-[6px] right-2 bottom-[6px] left-7" dash="17 9" />
        </div>

        <div className="flex items-start justify-between">
          <Bar tag="5" label="Move" className="h-6 w-[215px] pl-2" />
          <div className={`relative w-[198px] border-b-2 border-[#8a8a8a] pt-px pb-px ${GUTTER}`}>
            <Menu
              end="w-[26px]"
              items={[
                { label: 'Left', icon: 'left', keys: 'Ctrl+Left' },
                { label: 'Up', icon: 'up', keys: 'Ctrl+Up' },
                { label: 'Down', icon: 'down', keys: 'Ctrl+Down' },
                { label: 'Right', icon: 'right', keys: 'Ctrl+Right' },
              ]}
            />
            <Frame className="inset-x-[3px] top-px bottom-px" />
          </div>
        </div>
        <Notes lines={['Up/Down是平行目录间上下移动', 'Left/Right是子母目录间里外移动']} className="-mb-1 pt-[2px] pr-1 text-right leading-[23px]" />

        <div className="flex items-start justify-between">
          <Bar tag="6" label="Transfer" className="h-6 w-[218px] pl-2.5" />
          <div className={`relative w-[196px] border-b-2 border-[#8a8a8a] pt-[2px] ${GUTTER}`}>
            <Menu
              items={[
                { label: 'Cut', icon: 'cut', keys: 'Shift+Ctrl+X' },
                { label: 'Copy', icon: 'copy', keys: 'Shift+Ctrl+C' },
                { label: 'Paste', icon: 'paste', keys: 'Shift+Ctrl+V', disabled: true },
              ]}
            />
            <Frame className="inset-x-[3px] top-[2px] bottom-px" />
          </div>
        </div>
        <Notes lines={['具体的剪切、复制、粘贴的快捷键']} className="-mb-1 pr-1 text-right text-[13px] leading-[18px]" />
      </div>
    </section>
  );
}

function SortNavigateSection() {
  return (
    <section className="flex items-start pt-px">
      <div className="flex-1">
        <div className="flex items-center">
          <Tag className="w-12 pl-3">12</Tag>
          <Bar icon="sort" label="Sort" className="h-[22px] flex-1 pl-1 text-[13px]" />
        </div>
        <Notes lines={['1.仅排序光标目录以下的子目录树', '2.排序所有目录树']} className="pt-px pl-[23px] text-[15px] leading-[25px]" />
      </div>
      <Menu
        gutter="w-[31px]"
        row="h-[22px]"
        className={`w-[140px] border border-[#a5a5a5] pt-px pb-px text-[13px] shadow ${GUTTER}`}
        items={[{ label: 'Sort Subtree' }, { label: 'Sort Full Tree' }]}
      />
      <Bar tag="7" label="Navigate" className="ml-[2px] h-6 w-[218px] pl-3 text-sm" />
      <div className={`relative w-[243px] pt-[2px] text-sm ${GUTTER}`}>
        <Menu
          end="w-5"
          items={[
            { label: 'Go Up', keys: 'Alt+Up' },
            { label: 'Go Down', keys: 'Alt+Down' },
            { label: 'Go Left', keys: 'Shift+Alt+Left' },
            { label: 'Go Right', keys: 'Shift+Alt+Right' },
          ]}
        />
        <Frame className="inset-x-[2px] top-[2px] bottom-px" />
      </div>
    </section>
  );
}

function ProtectionSection() {
  return (
    <section className="flex items-start justify-end text-sm">
      <Tag className="pt-px pr-1.5">8</Tag>
      <div className="w-[224px]">
        <div className="border-l-2 border-[#b5b5b5]">
          <Bar icon="padlock" label="Protection" className="h-6 w-full pl-1.5" />
        </div>
        <Notes
          lines={['1.加密单条目录', '2.解密单条目录', '3.加密单个page内的目录树', '4.解密单个page内的目录树', '5.紧凑、重新创建全文索引的数据库文件']}
          className="-mt-1 w-0 pl-[2px] text-[15px] leading-6"
        />
      </div>
      <div className={`relative h-[122px] w-[192px] pt-[2px] ${GUTTER}`}>
        <Menu
          gutter="w-[38px]"
          end="w-0"
          items={[
            { label: <><u>P</u>rotect note</>, icon: 'padlock' },
            { label: <><u>U</u>nprotect Note</>, icon: 'unlock' },
            '-',
            { label: 'Protect Subtree', icon: 'treeLock' },
            { label: 'Unprotect Subtree', icon: 'treeUnlock' },
            '-',
            { label: 'File Cleanup', icon: 'broom' },
          ]}
        />
        <Frame className="inset-[2px]" />
      </div>
    </section>
  );
}

function FormatSection() {
  return (
    <section className="-mt-px flex items-start justify-end text-xs">
      <Tag className="-mt-px pr-[2px]">9</Tag>
      <div className="w-[182px]">
        <Bar icon="palette" label="Format" className="h-5 w-full pl-px" />
        <Notes lines={['1.目录文字加粗', '2.目录文字颜色', '3.目录文字背景颜色']} className="w-0 pl-[77px] text-[15px] leading-6" />
      </div>
      <div className="relative flex h-[154px] w-[297px] items-start">
        <Menu
          gutter="w-[30px]"
          end="w-4"
          row="h-5"
          className={`w-[157px] border-r border-b border-[#a5a5a5] pt-px ${GUTTER}`}
          items={[
            { label: 'Bold', icon: 'bold', keys: 'Alt+B' },
            { label: 'Text Color', icon: 'textPalette', more: true, active: true },
            { label: 'Background Color', icon: 'palette', more: true },
          ]}
        />
        <div className="mt-[21px] flex h-[133px] min-w-0 flex-1 flex-col items-center border border-[#a5a5a5] bg-[#fdfdfd]">
          <button className="h-[22px]">Default</button>
          <hr className="w-20 border-[#b9b9b9]" />
          <div className="grid w-full grid-cols-8 gap-y-[5px] pt-[5px] pb-1 pl-1">
            {swatches.map((c) => (
              <button key={c} aria-label={c} className="size-[11px] border border-[#8c8c8c]" style={{ backgroundColor: c }} />
            ))}
          </div>
          <hr className="mt-[2px] w-20 border-[#b9b9b9]" />
          <button className="h-6">More...</button>
        </div>
        <Frame className="inset-[2px]" dash="17 9" />
      </div>
    </section>
  );
}

function SelectIconSection() {
  return (
    <section className="flex items-start justify-end pt-[2px] text-xs">
      <Tag className="-mt-px pr-2">10</Tag>
      <Bar icon="landscape" label={<>Select <u>I</u>con</>} className="h-5 w-[183px] pl-px" />
      <div className="relative ml-[2px] flex w-[254px] flex-col items-center border-b border-l border-[#9a9a9a] bg-[#fdfdfd]">
        <button className="h-6">Default</button>
        <hr className="w-[150px] border-[#b9b9b9]" />
        <div className="grid w-full grid-cols-12 gap-y-1 pt-[3px] pl-[3px]">
          {iconGrid.map((name, i) => (
            <button key={i} aria-label={name} className="size-4">
              <Icon name={name} />
            </button>
          ))}
        </div>
        <hr className="mt-[22px] w-[150px] border-[#b9b9b9]" />
        <button className="h-[23px]">More...</button>
        <Frame className="top-[2px] right-[3px] bottom-1 left-[2px]" />
      </div>
    </section>
  );
}

function MoreSection() {
  return (
    <section className="flex items-start justify-end text-[13px]">
      <Tag className="pr-1.5">15</Tag>
      <Bar label="More..." className="h-[22px] w-[200px] pl-8" />
      <div className="ml-px w-[292px]">
        <div className={`relative pt-px pb-px ${GUTTER}`}>
          <Menu
            gutter="w-[34px]"
            end="w-0"
            row="h-[22px]"
            sep="h-[2px]"
            items={[
              { label: 'Copy Tree to Clipboard' },
              { label: 'Copy Captions and URLs to Clipboard' },
              '-',
              { label: 'Expand All', icon: 'treeColor' },
              { label: 'Collapse All', icon: 'treeColor' },
              '-',
              { label: 'Exclude from Evernote Sync' },
            ]}
          />
          <Frame className="inset-[2px]" />
        </div>
        <Notes
          lines={['1.复制目录树标题于剪贴板中；', '2复制目录树标题+附件地址于剪贴板中；', '3.展开所有目录项；', '4.收缩所有目录项;', '5.该page不同步于印象笔记中。']}
          className="-mt-1 pl-[2px] text-[15px] leading-6"
        />
      </div>
    </section>
  );
}

export default function App() {
  return (
    <main className="overflow-x-clip bg-white font-['Open_Sans','Noto_Sans_CJK_SC',sans-serif] text-[#222]">
      <h1 className="h-[50px] pr-4 text-center text-[42px] leading-[46px] text-[#e63950]">Tree工具栏位的说明</h1>
      <h2 className="pl-[207px] text-xl leading-6 font-bold text-black">目录树类比于思维导图</h2>
      <TreeSection />
      <SortNavigateSection />
      <Notes
        lines={['Go Up/Go Down是页面内部的上下移动', 'Go Left/Go Right是页面内部的左右移动']}
        className="-mt-1 pr-1 text-right text-[15px] leading-6"
      />
      <ProtectionSection />
      <FormatSection />
      <SelectIconSection />
      <MoreSection />
    </main>
  );
}
